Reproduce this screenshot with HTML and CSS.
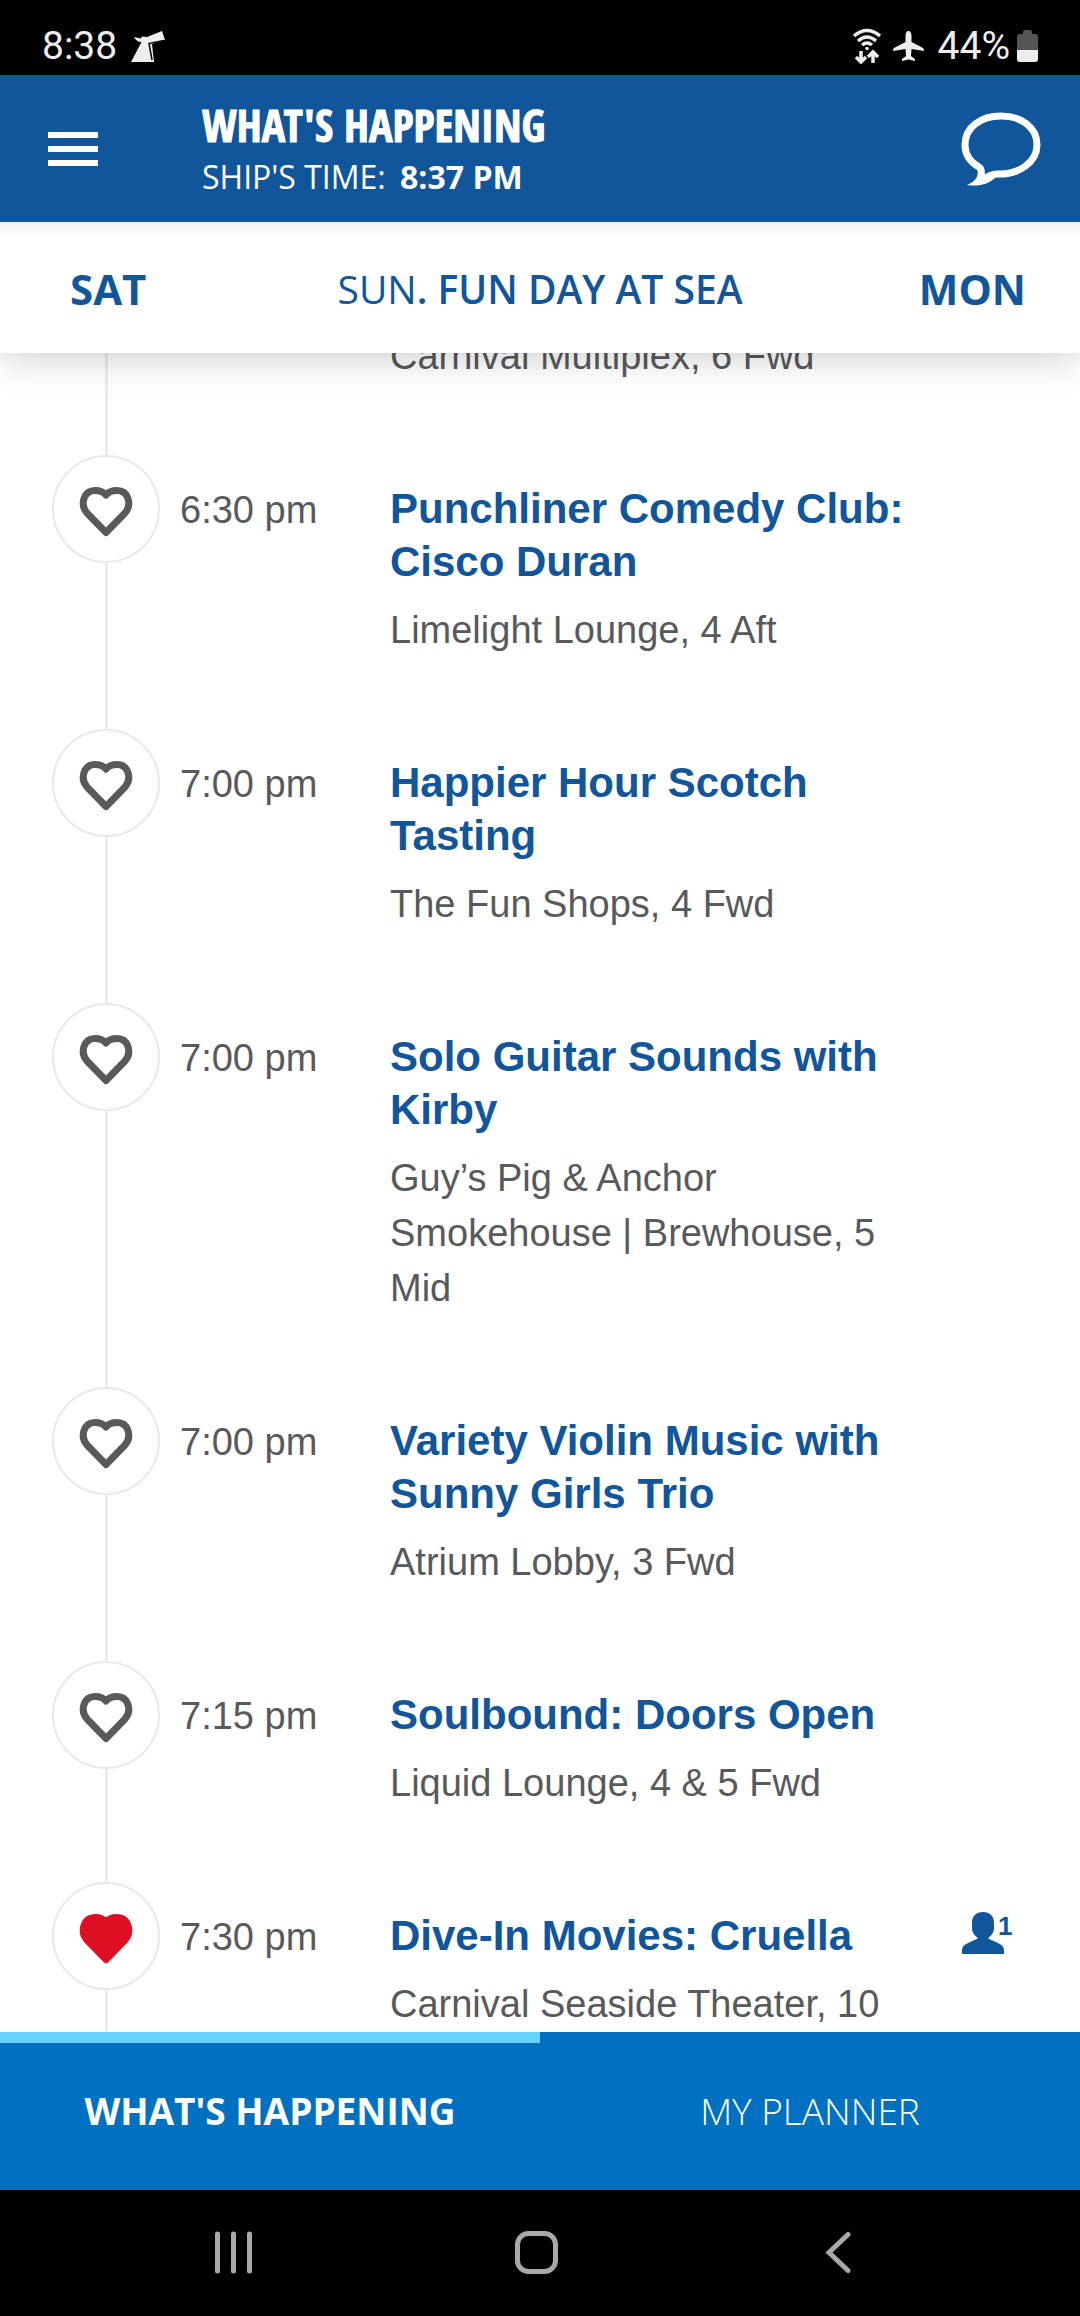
FILE: index.html
```html
<!DOCTYPE html>
<html lang="en">
<head>
<meta charset="UTF-8">
<meta name="viewport" content="width=device-width, initial-scale=1">
<title>What's Happening</title>
<link rel="stylesheet" href="styles.css">
</head>
<body>
    <!-- heart shape shared by every event -->
    <svg class="defs" aria-hidden="true">
        <symbol id="heart" viewBox="0 0 54 50">
            <path d="M27 45.500 L8 26 C0.500 17 5 3.500 16 3.500 C21 3.500 25 5.500 27 8 C29 5.500 33 3.500 38 3.500 C49 3.500 53.500 17 46 26 Z" stroke-width="7" stroke-linejoin="round"/>
        </symbol>
    </svg>

    <div class="status-bar">
        <span class="clock">8:38</span>
        <svg class="icon-funnel" width="34" height="31" viewBox="0 0 34 31" aria-hidden="true">
            <path d="M0 31 L10.500 11 C8 11 5 10 3 6 L10 7.500 L11 5.500 L16 6 L31 0 L34 9 L21 13 L23 31 Z" fill="#eee"/>
            <path d="M33 9.500 L18 12.500 L21 29" fill="none" stroke="#000" stroke-width="1.500"/>
        </svg>
        <div class="status-right">
            <svg width="28" height="36" viewBox="0 0 28 36" fill="none" stroke="#eee" stroke-width="3.500" aria-hidden="true">
                <path d="M1 8 Q14 -3 27 8 M5 13 Q14 5 23 13 M9 17 Q14 13 19 17"/>
                <circle cx="14" cy="20.500" r="1.800" fill="#eee" stroke="none"/>
                <path d="M8 23 V34 M3 29 L8 34 L13 29 M20 35 V24 M15 29 L20 24 L25 29"/>
            </svg>
            <svg width="31" height="30" viewBox="0 0 31 30" fill="#eee" aria-hidden="true">
                <path d="M15.500 0 C17.500 0 18.500 2 18.500 5 V11 L30 17 Q31 18 31 20 L18.500 18 L18 25 L22 28 V30 L15.500 28.500 L9 30 V28 L13 25 L12.500 18 L0 20 Q0 18 1 17 L12.500 11 V5 C12.500 2 13.500 0 15.500 0 Z"/>
            </svg>
            <span class="battery-level">44%</span>
            <svg width="21" height="32" viewBox="0 0 21 32" aria-hidden="true">
                <path d="M6 4 V2 Q6 0 8 0 H13 Q15 0 15 2 V4 H18 Q21 4 21 7 V20 H0 V7 Q0 4 3 4 Z" fill="#555"/>
                <path d="M0 20 H21 V29 Q21 32 18 32 H3 Q0 32 0 29 Z" fill="#eee"/>
            </svg>
        </div>
    </div>

    <header class="header">
        <button class="menu-button" type="button" aria-label="Menu">
            <span></span>
            <span></span>
            <span></span>
        </button>
        <div class="header-text">
            <h1>WHAT'S HAPPENING</h1>
            <p>SHIP'S TIME: <strong>8:37 PM</strong></p>
        </div>
        <button class="chat-button" type="button" aria-label="Chat">
            <svg width="80" height="74" viewBox="0 0 80 74" aria-hidden="true">
                <path d="M36 62 C58 63 76 50 76 33 C76 15 60 4 40 4 C20 4 4 15 4 33 C4 44 11 51 18 55 C22 58 20 63 19 68 C26 66 30 62 36 62 Z" fill="none" stroke="#fff" stroke-width="7"/>
                <path d="M17 62 C15 69 10 71 6 73 C18 75 28 72 35 65 L24 64 Z" fill="#fff"/>
            </svg>
        </button>
    </header>

    <nav class="days">
        <a class="day prev" href="#sat">SAT</a>
        <h2 class="today"><span>SUN</span>. FUN DAY AT SEA</h2>
        <a class="day next" href="#mon">MON</a>
    </nav>

    <main class="events">
        <article class="event event-scrolled">
            <div class="marker"><div class="line"></div></div>
            <div class="info">
                <p>Carnival Multiplex, 6 Fwd</p>
            </div>
        </article>
        <article class="event">
            <div class="marker">
                <button class="like" type="button" aria-label="Add to planner"><svg width="54" height="50"><use href="#heart"/></svg></button>
                <div class="line"></div>
            </div>
            <time>6:30 pm</time>
            <div class="info">
                <h3>Punchliner Comedy Club: Cisco Duran</h3>
                <p>Limelight Lounge, 4 Aft</p>
            </div>
        </article>
        <article class="event">
            <div class="marker">
                <button class="like" type="button" aria-label="Add to planner"><svg width="54" height="50"><use href="#heart"/></svg></button>
                <div class="line"></div>
            </div>
            <time>7:00 pm</time>
            <div class="info">
                <h3>Happier Hour Scotch Tasting</h3>
                <p>The Fun Shops, 4 Fwd</p>
            </div>
        </article>
        <article class="event">
            <div class="marker">
                <button class="like" type="button" aria-label="Add to planner"><svg width="54" height="50"><use href="#heart"/></svg></button>
                <div class="line"></div>
            </div>
            <time>7:00 pm</time>
            <div class="info">
                <h3>Solo Guitar Sounds with Kirby</h3>
                <p>Guy’s Pig &amp; Anchor Smokehouse | Brewhouse, 5 Mid</p>
            </div>
        </article>
        <article class="event">
            <div class="marker">
                <button class="like" type="button" aria-label="Add to planner"><svg width="54" height="50"><use href="#heart"/></svg></button>
                <div class="line"></div>
            </div>
            <time>7:00 pm</time>
            <div class="info">
                <h3>Variety Violin Music with Sunny Girls Trio</h3>
                <p>Atrium Lobby, 3 Fwd</p>
            </div>
        </article>
        <article class="event">
            <div class="marker">
                <button class="like" type="button" aria-label="Add to planner"><svg width="54" height="50"><use href="#heart"/></svg></button>
                <div class="line"></div>
            </div>
            <time>7:15 pm</time>
            <div class="info">
                <h3>Soulbound: Doors Open</h3>
                <p>Liquid Lounge, 4 &amp; 5 Fwd</p>
            </div>
        </article>
        <article class="event">
            <div class="marker">
                <button class="like liked" type="button" aria-label="Remove from planner"><svg width="54" height="50"><use href="#heart"/></svg></button>
                <div class="line"></div>
            </div>
            <time>7:30 pm</time>
            <div class="info">
                <h3>Dive-In Movies: Cruella</h3>
                <p>Carnival Seaside Theater, 10</p>
            </div>
            <div class="guests">
                <svg width="42" height="42" viewBox="0 0 42 42" aria-hidden="true">
                    <path d="M21 0 C28 0 32 4 32 11 V16 C32 21 29 24 26 26 C31 30 42 31 42 38 V42 H0 V38 C0 31 11 30 16 26 C13 24 10 21 10 16 V11 C10 4 14 0 21 0 Z" fill="#11559b"/>
                </svg>
                <span>1</span>
            </div>
        </article>
    </main>

    <nav class="tabs">
        <a class="tab active" href="#happening">WHAT'S HAPPENING</a>
        <a class="tab" href="#planner">MY PLANNER</a>
    </nav>

    <div class="system-nav">
        <button type="button" aria-label="Recent apps">
            <svg width="43" height="43" viewBox="0 0 43 43"><path d="M5.500 3 V40 M21.500 3 V40 M37.500 3 V40"/></svg>
        </button>
        <button type="button" aria-label="Home">
            <svg width="43" height="43" viewBox="0 0 43 43"><rect x="2.500" y="2.500" width="38" height="38" rx="11"/></svg>
        </button>
        <button type="button" aria-label="Back">
            <svg width="43" height="43" viewBox="0 0 43 43"><path d="M31 3.500 L12 21.500 L31 39.500"/></svg>
        </button>
    </div>
</body>
</html>
```

FILE: styles.css
```css
* { box-sizing: border-box; margin: 0; padding: 0; }
body {
    display: flex;
    flex-direction: column;
    height: 100vh;
    overflow: hidden;
    background: #fff;
    font-family: "Liberation Sans", Arial, sans-serif;
    color: #58595b;
}
button {
    border: 0;
    background: none;
    cursor: pointer;
}
a {
    text-decoration: none;
}
svg {
    display: block;
}
.defs {
    position: absolute;
    width: 0;
    height: 0;
}

/* status bar */
.status-bar {
    display: flex;
    flex: none;
    align-items: center;
    height: 75px;
    padding: 17px 42px 0 42px;
    background: #000;
    color: #eee;
    font: 39px/58px Roboto, sans-serif;
}
.icon-funnel {
    margin-left: 14px;
}
.status-right {
    display: flex;
    align-items: center;
    gap: 12px;
    margin-left: auto;
}
.battery-level {
    margin: 0 -5px 0 2px;
}

/* header */
.header {
    position: relative;
    z-index: 2;
    display: flex;
    flex: none;
    align-items: center;
    height: 147px;
    padding: 0 39px 0 48px;
    background: #11559b;
    color: #fff;
}
.menu-button {
    display: flex;
    flex-direction: column;
    gap: 8px;
    width: 50px;
}
.menu-button span {
    height: 6px;
    background: #fff;
}
.header-text {
    flex: 1;
    margin-left: 104px;
    padding-top: 4px;
}
.header-text h1 {
    font: bold 44px/52px "Open Sans Condensed", "Roboto Condensed", "Liberation Sans Narrow", sans-serif;
    -webkit-text-stroke: 1px #fff;
}
.header-text p {
    font: 32px/52px "Open Sans", sans-serif;
}
.header-text strong {
    margin-left: 6px;
}

/* day switcher */
.days {
    position: relative;
    z-index: 1;
    display: grid;
    flex: none;
    grid-template-columns: 1fr auto 1fr;
    align-items: center;
    height: 131px;
    padding: 2px 54px 0;
    background: linear-gradient(#f2f2f2, #fff 16px);
    box-shadow: 0 0 40px rgba(0, 0, 0, .24);
    color: #11559b;
    font-family: "Open Sans", sans-serif;
}
.day {
    color: #11559b;
    font-size: 42px;
    font-weight: 700;
}
.prev {
    padding-left: 16px;
}
.next {
    text-align: right;
}
.today {
    font-size: 39px;
    font-weight: 600;
}
.today span {
    font-weight: 400;
}

/* timeline */
.events {
    flex: 1;
    min-height: 0;
    padding-left: 52px;
    overflow: hidden;
}
.event {
    display: flex;
}
.event-scrolled {
    margin-top: -24px;
}
.marker {
    display: flex;
    flex: none;
    flex-direction: column;
    align-items: center;
    width: 108px;
}
.line {
    flex: 1;
    width: 3px;
    background: #ebebeb;
}
.like {
    display: flex;
    align-items: center;
    justify-content: center;
    width: 108px;
    height: 108px;
    padding-top: 6px;
    border: 2px solid #e9e9e9;
    border-radius: 50%;
}
.like svg {
    fill: none;
    stroke: #58595b;
}
.liked svg {
    fill: #dc0f23;
    stroke: #dc0f23;
}
.event time {
    width: 230px;
    padding: 28px 0 0 20px;
    font-size: 38px;
    line-height: 55px;
}
.info {
    width: 530px;
    padding: 27px 0 71px;
}
.event-scrolled .info {
    margin-left: 230px;
    padding-top: 0;
}
.event time, .info {
    flex: none;
}
.info h3 {
    margin-bottom: 15px;
    color: #11559b;
    font-size: 42px;
    line-height: 53px;
}
.info p {
    font-size: 38px;
    line-height: 55px;
}
.guests {
    display: flex;
    margin: 30px 0 0 42px;
    color: #11559b;
    font-size: 26px;
    font-weight: 700;
    line-height: 28px;
}
.guests span {
    margin-left: -6px;
}

/* bottom tabs */
.tabs {
    display: flex;
    flex: none;
    height: 158px;
    background: #0071c1;
}
.tab {
    flex: 1;
    border-top: 11px solid transparent;
    color: #fff;
    font: 300 37px/136px "Open Sans", sans-serif;
    text-align: center;
}
.tab.active {
    border-color: #66d4ff;
    font-weight: 700;
}

.system-nav {
    display: flex;
    flex: none;
    align-items: center;
    height: 126px;
    padding: 0 90px 2px 82px;
    background: #000;
}
.system-nav button {
    display: flex;
    flex: 1;
    justify-content: center;
}
.system-nav svg {
    fill: none;
    stroke: #a9a9a9;
    stroke-width: 5px;
    stroke-linecap: round;
}
```
